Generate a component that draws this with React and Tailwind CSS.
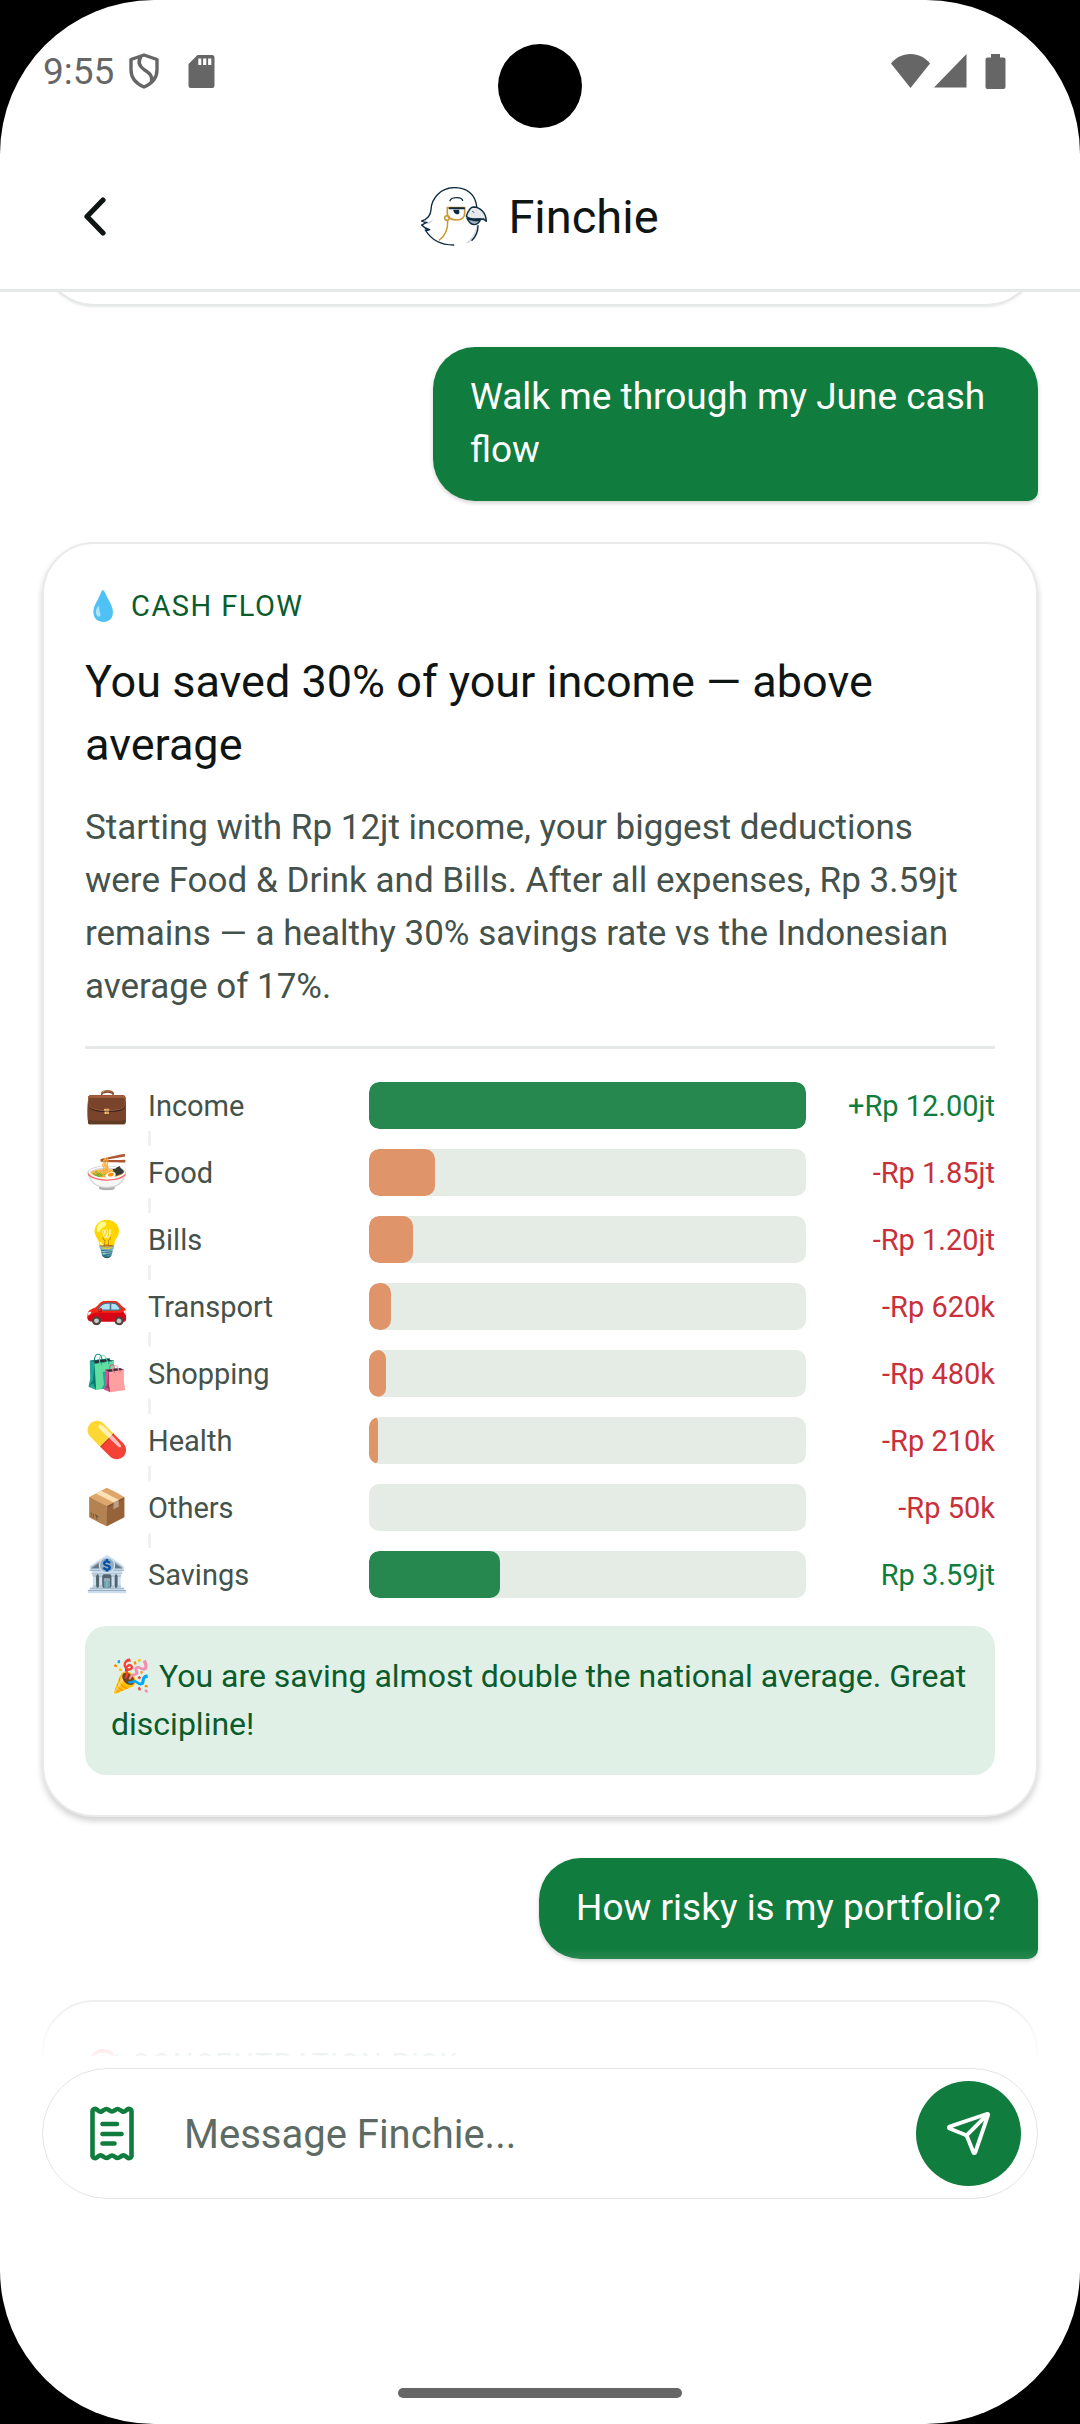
import React from "react";
import { Send } from "lucide-react";

const CASH_FLOW = [
  { icon: "💼", label: "Income", amount: "+Rp 12.00jt", share: 100, positive: true },
  { icon: "🍜", label: "Food", amount: "-Rp 1.85jt", share: 15 },
  { icon: "💡", label: "Bills", amount: "-Rp 1.20jt", share: 10 },
  { icon: "🚗", label: "Transport", amount: "-Rp 620k", share: 5 },
  { icon: "🛍️", label: "Shopping", amount: "-Rp 480k", share: 4 },
  { icon: "💊", label: "Health", amount: "-Rp 210k", share: 2 },
  { icon: "📦", label: "Others", amount: "-Rp 50k", share: 0 },
  { icon: "🏦", label: "Savings", amount: "Rp 3.59jt", share: 30, positive: true },
];

function StatusBar() {
  return (
    <div className="relative flex h-[142px] shrink-0 items-center justify-between pl-[43px] pr-[74px] text-[#666666]">
      <div className="flex items-center">
        <span className="text-[37px] leading-[43px]">9:55</span>
        <svg className="ml-[15px] h-[36px] w-[30px]" viewBox="0 0 30 36" fill="none" stroke="currentColor" strokeWidth="3.4" strokeLinejoin="round" aria-hidden="true">
          <path d="M15 2 28 6.500V17c0 8-5 13.500-13 17C7 30.500 2 25 2 17V6.500Z" />
          <path d="M12 3.500C9 8 9.500 12.500 15 16.500c6 4 8.500 6 7.500 12" />
        </svg>
        <svg className="ml-[29px] h-[33px] w-[27px]" viewBox="0 0 27 33" fill="currentColor" aria-hidden="true">
          <path fillRule="evenodd" d="M9.500 0H24.500A2.200 2.200 0 0 1 26.500 2.200V30.800A2.200 2.200 0 0 1 24.300 33H2.700A2.200 2.200 0 0 1 .5 30.800V9Zm.8 3.500v6.500h3V3.500Zm4.800 0v6.500h3.200V3.500Zm5 0v6.500h3.200V3.500Z" />
        </svg>
      </div>
      <div className="absolute left-1/2 top-[44px] size-[84px] -translate-x-1/2 rounded-full bg-black" />
      <div className="flex items-center">
        <svg className="h-[34px] w-[39px]" viewBox="0 0 39 34" fill="currentColor" aria-hidden="true">
          <path d="M19.500 34 0 9.500C5 3.500 11.500 0 19.500 0S34 3.500 39 9.500Z" />
        </svg>
        <svg className="ml-[4px] h-[34px] w-[33px]" viewBox="0 0 33 34" fill="currentColor" aria-hidden="true">
          <path d="M32.500 0V33.500H0Z" />
        </svg>
        <svg className="ml-[18px] h-[35px] w-[21px]" viewBox="0 0 21 35" fill="currentColor" aria-hidden="true">
          <path d="M6 0h9v3.500h3.500A2 2 0 0 1 20.500 5.500V33a2 2 0 0 1-2 2h-16a2 2 0 0 1-2-2V5.500a2 2 0 0 1 2-2H6Z" />
        </svg>
      </div>
    </div>
  );
}

function FinchLogo() {
  return (
    <svg className="h-[59px] w-[66px]" viewBox="65 49 198 177" fill="none" strokeWidth="4.200" strokeLinecap="round" strokeLinejoin="round" aria-hidden="true">
      <path d="M231 164c-2 20-12 38-31 53 8 1 12-1 17-7 14-15 18-30 19-47Z" fill="#d9dbe2" />
      <path d="M84 155c8-1 12-4 17-9-2 8-8 12-17 15Z" fill="#c9cdd3" />
      <g stroke="#0e2a3f">
        <path d="M232 108C229 72 204 51 165 51c-41 0-69 32-70 66-1 17-9 28-28 34 5 4 10 4 16 4-7 3-12 6-16 8 7 8 14 12 24 14-5 3-9 2-13 1 18 30 46 45 85 45" />
        <path d="M236 165c0 17-5 31-18 44" />
        <path d="M152 90c3-10 32-14 38-1" />
      </g>
      <path d="M144 111h52v17c0 12-9 20-23 20s-29-6-29-19Z" stroke="#c9972b" strokeWidth="5" />
      <circle cx="143" cy="142" r="7" stroke="#c9972b" strokeWidth="4.500" />
      <path d="M145 152c1 24-8 44-25 56" stroke="#c9972b" strokeWidth="4.500" />
      <path d="M151 113h43" stroke="#0e2a3f" strokeWidth="6" />
      <path d="M162 117h18c-1 4 0 7 1 9l-4 5c-9 1-15-6-15-14Z" fill="#0e2a3f" />
      <path d="M201 137c5-16 12-28 22-28 20 1 37 17 38 43-6-7-16-8-27-7-12 1-25-1-33-8Z" fill="#e6e8ec" stroke="#0e2a3f" />
      <path d="M203 142c6 15 13 20 23 20 8-1 13-5 17-14-10 3-31 1-40-6Z" fill="#9fb0bd" stroke="#0e2a3f" />
      <path d="M204 143c14 5 33 3 50 2" stroke="#0e2a3f" strokeWidth="4.500" />
      <path d="m220 122 3 3" stroke="#0e2a3f" strokeWidth="3" />
    </svg>
  );
}

function ReceiptIcon() {
  return (
    <svg className="h-[55px] w-[44px]" viewBox="0 0 44 55" fill="none" stroke="currentColor" strokeWidth="4.600" strokeLinecap="round" strokeLinejoin="round" aria-hidden="true">
      <path d="M2.500 5.500C2.500 3 5 2.200 6.800 3.600 9 5.400 9.800 6.500 11.500 5.500 14 4 14.800 3 16.500 3c2 0 3.200 2.500 5.500 2.500S25.500 3 27.500 3c1.700 0 2.500 1 5 2.500C34.200 6.500 35 5.400 37.200 3.600 39 2.200 41.500 3 41.500 5.500v44c0 2.500-2.500 3.300-4.300 1.900-2.200-1.800-3-2.900-4.700-1.900-2.500 1.500-3.300 2.500-5 2.500-2 0-3.200-2.500-5.500-2.500s-3.500 2.500-5.500 2.500c-1.700 0-2.500-1-5-2.500-1.700-1-2.500.1-4.700 1.900-1.800 1.400-4.300.6-4.300-1.900Z" />
      <path d="M12.500 18H27M12.500 28H31.500M12.500 37.500H24.500" />
    </svg>
  );
}

function UserMessage({ children }) {
  return (
    <p className="max-w-[605px] self-end rounded-[42px] rounded-br-[10px] bg-[#107c3e] px-[37px] pb-[25px] pt-[23px] text-[37px] leading-[53px] text-white shadow-[0_2px_4px_rgba(0,0,0,0.18)]">
      {children}
    </p>
  );
}

function CardLabel({ icon, children }) {
  return (
    <p className="text-[29px] leading-[44px] tracking-wider text-[#0b5c2c]">
      {icon} {children}
    </p>
  );
}

function CashFlowRow({ row, last }) {
  return (
    <li>
      <div className="grid h-[47px] grid-cols-[63px_221px_1fr_189px] items-center text-[29px] leading-[44px]">
        <span className="text-[35px]">{row.icon}</span>
        <span className="text-[#44524b]">{row.label}</span>
        <span className="h-full overflow-hidden rounded-[10px] bg-[#e5ece5]">
          <span
            className={row.positive ? "block h-full rounded-[10px] bg-[#26884f]" : "block h-full rounded-[10px] bg-[#df946a]"}
            style={{ width: `${row.share}%` }}
          />
        </span>
        <span className={row.positive ? "text-right text-[#107c3e]" : "text-right text-[#c8303a]"}>{row.amount}</span>
      </div>
      {!last && <div className="mb-[3px] ml-[63px] mt-[2px] h-[15px] w-[3px] bg-[#f1f1f1]" />}
    </li>
  );
}

function CashFlowCard() {
  return (
    <article className="rounded-[52px] border-2 border-[#e9ebea] bg-white px-[41px] py-[40px] shadow-[0_4px_6px_rgba(0,0,0,0.18)]">
      <CardLabel icon="💧">CASH FLOW</CardLabel>
      <h2 className="mt-[22px] text-[45px] leading-[63px] text-[#0f1513]">You saved 30% of your income — above average</h2>
      <p className="mt-[25px] text-[35px] leading-[53px] text-[#44524b]">
        Starting with Rp 12jt income, your biggest deductions were Food &amp; Drink and Bills. After all expenses, Rp
        3.59jt remains — a healthy 30% savings rate vs the Indonesian average of 17%.
      </p>
      <hr className="my-[33px] border-t-[3px] border-[#e5e9e7]" />
      <ul>
        {CASH_FLOW.map((row, i) => (
          <CashFlowRow key={row.label} row={row} last={i === CASH_FLOW.length - 1} />
        ))}
      </ul>
      <p className="mt-[28px] rounded-[21px] bg-[#e1f0e7] px-[26px] pb-[27px] pt-[26px] text-[32px] leading-[48px] text-[#0b5c2c]">
        🎉 You are saving almost double the national average. Great discipline!
      </p>
    </article>
  );
}

export default function App() {
  return (
    <div className="h-screen bg-black font-['Roboto',sans-serif]">
      <div className="flex h-full flex-col overflow-hidden rounded-[154px] bg-white">
        <StatusBar />
        <header className="grid h-[150px] shrink-0 grid-cols-[1fr_auto_1fr] items-center border-b-[3px] border-[#e5e9e7] px-[42px] pt-[2px]">
          <button type="button" aria-label="Back" className="flex size-[105px] items-center justify-center text-[#0f1513]">
            <svg className="h-[39px] w-[22px]" viewBox="0 0 22 39" fill="none" stroke="currentColor" strokeWidth="5.200" strokeLinecap="round" strokeLinejoin="round" aria-hidden="true">
              <path d="M19 3 3 19.500 19 36" />
            </svg>
          </button>
          <div className="flex items-center gap-[21px]">
            <FinchLogo />
            <h1 className="text-[47px] leading-[60px] text-[#0f1513]">Finchie</h1>
          </div>
        </header>

        <main className="relative min-h-0 flex-1 overflow-hidden px-[42px]">
          <div className="flex flex-col gap-[41px]">
            <div className="-mt-[91px] h-[105px] rounded-[52px] border-2 border-[#e5e9e7] bg-white shadow-[0_1px_3px_rgba(0,0,0,0.1)]" />
            <UserMessage>Walk me through my June cash flow</UserMessage>
            <CashFlowCard />
            <UserMessage>How risky is my portfolio?</UserMessage>
            <article className="rounded-[52px] border-2 border-[#e0e4e2] bg-white px-[41px] pb-[336px] pt-[40px]">
              <CardLabel icon="🎯">CONCENTRATION RISK</CardLabel>
            </article>
          </div>
          <div className="pointer-events-none absolute inset-x-0 bottom-0 h-[108px] bg-linear-to-b from-white/0 to-white/95" />
        </main>

        <footer className="flex shrink-0 flex-col px-[42px] pb-[26px] pt-[12px]">
          <form className="flex h-[131px] items-center rounded-full border border-[#e2e5e3] pl-[47px] pr-[16px]" onSubmit={(e) => e.preventDefault()}>
            <button type="button" aria-label="Attach receipt" className="text-[#107c3e]">
              <ReceiptIcon />
            </button>
            <input
              type="text"
              aria-label="Message Finchie"
              placeholder="Message Finchie..."
              className="ml-[50px] min-w-0 flex-1 bg-transparent pt-[2px] text-[40px] leading-[53px] text-[#0f1513] outline-none placeholder:text-[#5d6b64]"
            />
            <button type="submit" aria-label="Send" className="flex size-[105px] items-center justify-center rounded-full bg-[#107c3e] text-white">
              <Send size={47} strokeWidth={2} />
            </button>
          </form>
          <div className="mt-[189px] h-[10px] w-[284px] self-center rounded-full bg-[#666666]" />
        </footer>
      </div>
    </div>
  );
}
